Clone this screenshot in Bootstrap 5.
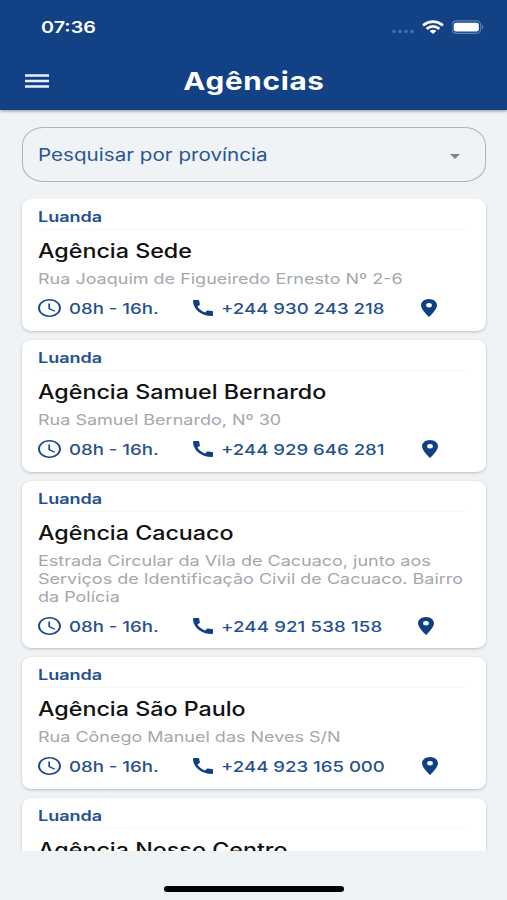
<!DOCTYPE html>
<html lang="pt">
<head>
<meta charset="utf-8">
<meta name="viewport" content="width=device-width, initial-scale=1">
<title>Agências</title>
<link href="https://cdn.jsdelivr.net/npm/bootstrap@5.3.0/dist/css/bootstrap.min.css" rel="stylesheet">
<style>
body{font-family:Inter,"Liberation Sans",sans-serif;background:#eff3f6;height:900px;overflow:hidden}
.screen{height:900px}
.topbar{height:110px;background:#124285;box-shadow:0 1px 3px rgba(0,0,0,.4);z-index:1}
.status{height:54px;padding:0 23px 0 41px}
.titlebar{height:54px}
.menu-btn{left:25px;top:20px}
svg{display:block;flex:none}
/* wide lettering: text is stretched horizontally */
.wide{display:inline-block;white-space:nowrap;transform:scaleX(1.22);transform-origin:0 50%}
.clock{font-size:15.8px;font-weight:600;transform:scaleX(1.25);padding-top:2px}
.heading{font-size:24.3px;font-weight:700;line-height:30px;letter-spacing:.6px;transform-origin:50% 50%}
.search{height:55px;margin:17px 21px 0 22px;border:1.3px solid #b0b3b6;border-radius:22px/18px;padding:0 25px 0 15px;color:#2a5596;font-size:17.2px}
.search .wide{transform:scaleX(1.2)}
.listing{height:652px;margin-top:17px;padding:0 21px 0 22px;overflow:hidden}
.agency{border:0;border-radius:10px/8px;background:#fff;padding:6px 18px 0 16px;margin-bottom:9px;height:131.8px;flex:none;box-shadow:0 1px 3px rgba(0,0,0,.22)}
.agency.tall{height:167.8px}
.province{height:25px;line-height:24px;font-size:14.6px;font-weight:600;color:#24508f;border-bottom:1px solid #f6f7f8}
.province .wide{transform:scaleX(1.235)}
.agency-name{font-size:19.6px;font-weight:500;line-height:24px;color:#111;margin:9px 0 0}
.agency-name .wide{transform:scaleX(1.188)}
.address{font-size:14.6px;line-height:18px;color:#a3a8ae;margin:7px 0 0}
.address .wide{transform:scaleX(1.233)}
.contact{height:24px;margin-top:8px;color:#24508f;font-size:14.8px;font-weight:500}
.hours{width:155px}
.phone{width:229px}
.phone-a{width:228px}
.phone-c{width:225px}
.contact .wide{margin-left:8px;padding-top:2px;transform:scaleX(1.255)}
.phone-c .wide{letter-spacing:.13px}
.homebar{width:180px;height:6px;border-radius:3px;background:#000;margin:35px auto 0}
</style>
<script src="https://cdn.jsdelivr.net/npm/bootstrap@5.3.0/dist/js/bootstrap.bundle.min.js"></script>
</head>
<body>
<svg width="0" height="0" class="d-none">
<symbol id="i-clock" viewBox="2 2 20 20" preserveAspectRatio="none"><path fill="#1b498c" d="M11.99 2C6.47 2 2 6.48 2 12s4.47 10 9.99 10C17.52 22 22 17.52 22 12S17.52 2 11.99 2zM12 20.200c-4.550 0-8.200-3.650-8.200-8.200s3.650-8.200 8.200-8.200 8.200 3.650 8.200 8.200-3.650 8.200-8.200 8.200zM12.500 7H11v6l5.250 3.150.75-1.230-4.500-2.670z"/></symbol>
<symbol id="i-phone" viewBox="3 3 18 18" preserveAspectRatio="none"><path fill="#0f3f84" d="M20.010 15.380c-1.230 0-2.420-.2-3.530-.560-.350-.120-.740-.030-1.010.240l-1.570 1.970c-2.830-1.350-5.480-3.900-6.890-6.830l1.950-1.660c.270-.280.350-.670.240-1.020-.370-1.110-.560-2.300-.560-3.530 0-.540-.450-.990-.990-.990H4.190C3.650 3 3 3.240 3 3.990 3 13.280 10.730 21 20.010 21c.710 0 .990-.630.990-1.180v-3.450c0-.540-.450-.990-.990-.990z"/></symbol>
<symbol id="i-pin" viewBox="5 2 14 20" preserveAspectRatio="none"><path fill="#0f3f84" d="M12 2C8.130 2 5 5.130 5 9c0 5.250 7 13 7 13s7-7.750 7-13c0-3.870-3.130-7-7-7zm0 9.500a2.500 2.500 0 1 1 0-5 2.500 2.500 0 0 1 0 5z"/></symbol>
</svg>
<div class="screen d-flex flex-column">
<header class="topbar position-relative text-white flex-shrink-0">
  <div class="status d-flex align-items-center justify-content-between">
    <span class="wide clock">07:36</span>
    <div class="d-flex align-items-center">
      <svg width="24" height="6" viewBox="0 0 24 6" class="mt-2 me-1"><g fill="#4a71a8"><circle cx="4" cy="3.500" r="1.800"/><circle cx="10" cy="3.500" r="1.800"/><circle cx="16" cy="3.500" r="1.800"/><circle cx="22.200" cy="3.500" r="1.800"/></g></svg>
      <svg width="22" height="14" viewBox="0 0 22 14" class="ms-1"><g fill="none" stroke="#fff" stroke-width="2.700"><path d="M1 5.400Q11-2.200 21 5.400"/><path d="M4.600 8.900Q11 4 17.400 8.900"/></g><path fill="#fff" d="M7.600 11Q11 8.600 14.400 11L11 13.900z"/></svg>
      <svg width="32" height="14" viewBox="0 0 32 14" class="ms-2"><rect x="-.2" y=".9" width="29" height="12.400" rx="4.500" fill="none" stroke="#5f82b4" stroke-width="1.200"/><rect x="1.700" y="2.700" width="25.200" height="8.900" rx="2.400" fill="#fff"/><path d="M30.200 5q2 2.200 0 4.400z" fill="#7895bf"/></svg>
    </div>
  </div>
  <div class="titlebar position-relative d-flex align-items-center justify-content-center">
    <svg class="menu-btn position-absolute" width="24" height="14" viewBox="0 0 24 14"><path d="M0 1.500h24M0 7h24M0 12.500h24" stroke="#e9f0fa" stroke-width="2.400"/></svg>
    <h1 class="wide heading m-0">Agências</h1>
  </div>
</header>
<div class="search d-flex align-items-center justify-content-between flex-shrink-0">
  <span class="wide">Pesquisar por província</span>
  <svg width="10" height="5" viewBox="0 0 10 5" class="mt-1"><path d="M0 0h10L5 5z" fill="#808488"/></svg>
</div>
<main class="listing d-flex flex-column flex-shrink-0">
  <article class="agency card">
    <div class="province"><span class="wide">Luanda</span></div>
    <h2 class="agency-name"><span class="wide">Agência Sede</span></h2>
    <p class="address"><span class="wide">Rua Joaquim de Figueiredo Ernesto Nº 2-6</span></p>
    <div class="contact d-flex align-items-center">
      <div class="hours d-flex align-items-center"><svg width="23" height="18"><use href="#i-clock"/></svg><span class="wide">08h - 16h.</span></div>
      <div class="phone phone-a d-flex align-items-center"><svg width="20" height="16"><use href="#i-phone"/></svg><span class="wide">+244 930 243 218</span></div>
      <svg width="16" height="18"><use href="#i-pin"/></svg>
    </div>
  </article>
  <article class="agency card">
    <div class="province"><span class="wide">Luanda</span></div>
    <h2 class="agency-name"><span class="wide">Agência Samuel Bernardo</span></h2>
    <p class="address"><span class="wide">Rua Samuel Bernardo, Nº 30</span></p>
    <div class="contact d-flex align-items-center">
      <div class="hours d-flex align-items-center"><svg width="23" height="18"><use href="#i-clock"/></svg><span class="wide">08h - 16h.</span></div>
      <div class="phone d-flex align-items-center"><svg width="20" height="16"><use href="#i-phone"/></svg><span class="wide">+244 929 646 281</span></div>
      <svg width="16" height="18"><use href="#i-pin"/></svg>
    </div>
  </article>
  <article class="agency tall card">
    <div class="province"><span class="wide">Luanda</span></div>
    <h2 class="agency-name"><span class="wide">Agência Cacuaco</span></h2>
    <p class="address"><span class="wide">Estrada Circular da Vila de Cacuaco, junto aos<br>Serviços de Identificação Civil de Cacuaco. Bairro<br>da Polícia</span></p>
    <div class="contact d-flex align-items-center">
      <div class="hours d-flex align-items-center"><svg width="23" height="18"><use href="#i-clock"/></svg><span class="wide">08h - 16h.</span></div>
      <div class="phone phone-c d-flex align-items-center"><svg width="20" height="16"><use href="#i-phone"/></svg><span class="wide">+244 921 538 158</span></div>
      <svg width="16" height="18"><use href="#i-pin"/></svg>
    </div>
  </article>
  <article class="agency card">
    <div class="province"><span class="wide">Luanda</span></div>
    <h2 class="agency-name"><span class="wide">Agência São Paulo</span></h2>
    <p class="address"><span class="wide">Rua Cônego Manuel das Neves S/N</span></p>
    <div class="contact d-flex align-items-center">
      <div class="hours d-flex align-items-center"><svg width="23" height="18"><use href="#i-clock"/></svg><span class="wide">08h - 16h.</span></div>
      <div class="phone d-flex align-items-center"><svg width="20" height="16"><use href="#i-phone"/></svg><span class="wide">+244 923 165 000</span></div>
      <svg width="16" height="18"><use href="#i-pin"/></svg>
    </div>
  </article>
  <article class="agency card">
    <div class="province"><span class="wide">Luanda</span></div>
    <h2 class="agency-name"><span class="wide">Agência Nosso Centro</span></h2>
  </article>
</main>
<div class="homebar flex-shrink-0"></div>
</div>
</body>
</html>
